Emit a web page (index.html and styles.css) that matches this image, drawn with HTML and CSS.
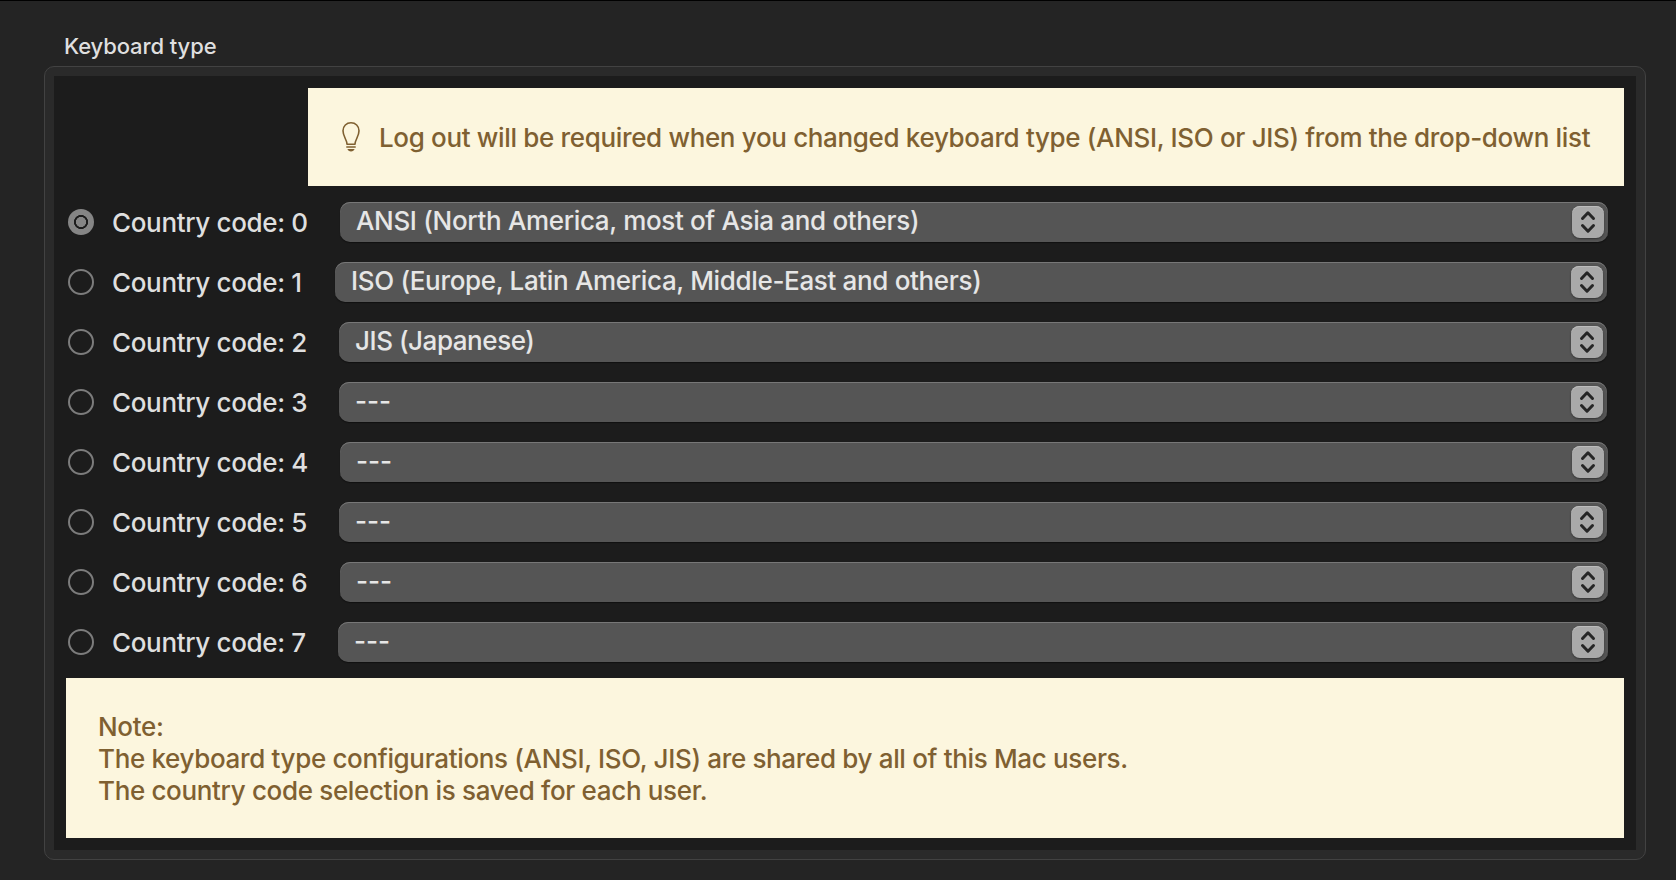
FILE: index.html
```
<!DOCTYPE html>
<html lang="en">
<head>
<meta charset="utf-8">
<title>Keyboard type</title>
<link rel="stylesheet" href="styles.css">
</head>
<body>
<svg class="defs" width="0" height="0" aria-hidden="true">
  <symbol id="updown" viewBox="0 0 32 32">
    <path d="M10.500 12.500 16 6.800l5.500 5.700M10.500 19.500 16 25.200l5.500-5.700"/>
  </symbol>
</svg>
<main class="pane">
  <h1 class="title">Keyboard type</h1>
  <section class="group">
    <div class="content">
      <div class="banner banner-top">
        <svg class="bulb" viewBox="0 0 18 30" width="18" height="30">
          <path d="M5 22.200C4.900 17.500 1 14.500 1 8.800 1 4 4.500.8 9 .8s8 3.200 8 8c0 5.700-3.900 8.700-4 13.400z" fill="none" stroke="currentColor" stroke-width="1.600" stroke-linejoin="round"/>
          <path d="M4.800 25.100h8.400" stroke="currentColor" stroke-width="1.500" stroke-linecap="round"/>
          <path d="M5.400 27.100h7.200c-.5 1.500-1.800 2.500-3.600 2.500s-3.100-1-3.600-2.500z" fill="currentColor"/>
        </svg>
        <p class="top-text">Log out will be required when you changed keyboard type (ANSI, ISO or JIS) from the drop-down list</p>
      </div>
      <div class="rows">
        <div class="row"><span class="radio checked"></span><span class="label">Country code: 0</span><div class="select"><span class="value">ANSI (North America, most of Asia and others)</span><svg class="knob"><use href="#updown"/></svg></div></div>
        <div class="row r1"><span class="radio"></span><span class="label">Country code: 1</span><div class="select"><span class="value">ISO (Europe, Latin America, Middle-East and others)</span><svg class="knob"><use href="#updown"/></svg></div></div>
        <div class="row r2"><span class="radio"></span><span class="label">Country code: 2</span><div class="select"><span class="value jis">JIS (Japanese)</span><svg class="knob"><use href="#updown"/></svg></div></div>
        <div class="row r2"><span class="radio"></span><span class="label">Country code: 3</span><div class="select"><span class="value none">---</span><svg class="knob"><use href="#updown"/></svg></div></div>
        <div class="row"><span class="radio"></span><span class="label">Country code: 4</span><div class="select"><span class="value none">---</span><svg class="knob"><use href="#updown"/></svg></div></div>
        <div class="row r2"><span class="radio"></span><span class="label">Country code: 5</span><div class="select"><span class="value none">---</span><svg class="knob"><use href="#updown"/></svg></div></div>
        <div class="row"><span class="radio"></span><span class="label">Country code: 6</span><div class="select"><span class="value none">---</span><svg class="knob"><use href="#updown"/></svg></div></div>
        <div class="row r7"><span class="radio"></span><span class="label">Country code: 7</span><div class="select"><span class="value none">---</span><svg class="knob"><use href="#updown"/></svg></div></div>
      </div>
      <div class="banner banner-note">
        <p>Note:</p>
        <p>The keyboard type configurations (ANSI, ISO, JIS) are shared by all of this Mac users.</p>
        <p>The country code selection is saved for each user.</p>
      </div>
    </div>
  </section>
</main>
</body>
</html>
```
FILE: styles.css
```
* { box-sizing: border-box; margin: 0; padding: 0; }
body {
  height: 880px;
  overflow: hidden;
  background: #242424;
  border-top: 1px solid #000;
  font-family: Inter, "Liberation Sans", sans-serif;
  font-size: 26px;
  font-weight: 450;
  line-height: 32px;
  letter-spacing: -0.34px;
  color: #dfdfdf;
}
.defs { position: absolute; }
.pane { padding: 31px 30px 0 44px; }
.title {
  height: 34px;
  padding-left: 20px;
  font-size: 22px;
  font-weight: 450;
  line-height: 28px;
  letter-spacing: -0.1px;
  white-space: nowrap;
}
.group {
  height: 794px;
  padding: 9px;
  border: 1px solid #424242;
  border-radius: 10px;
  background: #2a2a2a;
}
.content {
  display: flex;
  flex-direction: column;
  height: 774px;
  padding: 12px;
  background: #1c1c1c;
}
.banner { background: #fcf6de; color: #7f6031; white-space: nowrap; }
.banner-top {
  display: flex;
  align-items: center;
  align-self: flex-end;
  width: 1316px;
  height: 98px;
  padding-left: 34px;
  gap: 19px;
}
.top-text { padding-top: 2px; }
.rows { padding: 6px 16px 6px 2px; }
.row { display: flex; align-items: center; height: 60px; }
.radio {
  width: 26px;
  height: 26px;
  border: 2px solid #7c7c7c;
  border-radius: 50%;
}
.radio.checked {
  border: none;
  background: radial-gradient(circle, #858585 4.800px, #1c1c1c 5.300px, #1c1c1c 6.800px, #858585 7.300px);
}
.label { width: 228px; padding: 2px 0 0 18px; white-space: nowrap; }
.select {
  display: flex;
  flex: 1;
  justify-content: space-between;
  align-items: center;
  height: 40px;
  margin-left: 18px;
  padding: 0 4px 0 16px;
  border-radius: 10px;
  background: #555;
  box-shadow: inset 0 1px 0 #777, 0 1px 1px #111;
}
.r1 .select { margin: 0 1px 0 13px; }
.r2 .select { margin: 0 1px 0 17px; }
.r7 .select { margin-left: 16px; }
.value { white-space: nowrap; padding-bottom: 2px; color: #e6e6e6; }
.value.jis { letter-spacing: -0.45px; }
.value.none { letter-spacing: 0; font-weight: 500; }
.knob {
  width: 32px;
  height: 32px;
  border-radius: 8px;
  background: #a9a9a9;
  box-shadow: inset 0 1px 0 #bcbcbc, 0 1px 2px #333;
  fill: none;
  stroke: #262626;
  stroke-width: 3;
  stroke-linecap: round;
  stroke-linejoin: round;
}
.banner-note { height: 160px; padding: 33px 0 0 32px; }
```
